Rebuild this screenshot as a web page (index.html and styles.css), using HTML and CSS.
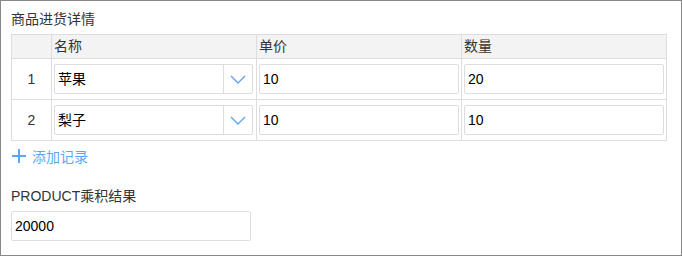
FILE: index.html
```html
<!DOCTYPE html>
<html lang="zh-CN">
<head>
<meta charset="utf-8">
<title>商品进货详情</title>
<link rel="stylesheet" href="styles.css">
</head>
<body>
<div class="panel">
  <div class="title">商品进货详情</div>
  <div class="grid">
    <div class="hcell"></div>
    <div class="hcell">名称</div>
    <div class="hcell">单价</div>
    <div class="hcell">数量</div>

    <div class="cell num">1</div>
    <div class="cell">
      <div class="select">
        <span class="select-text">苹果</span>
        <span class="select-btn"><svg width="16" height="9" viewBox="0 0 16 9"><path d="M1 1 L8 8 L15 1" fill="none" stroke="#5ea6f5" stroke-width="1.4"/></svg></span>
      </div>
    </div>
    <div class="cell"><div class="input">10</div></div>
    <div class="cell"><div class="input">20</div></div>

    <div class="cell num">2</div>
    <div class="cell">
      <div class="select">
        <span class="select-text">梨子</span>
        <span class="select-btn"><svg width="16" height="9" viewBox="0 0 16 9"><path d="M1 1 L8 8 L15 1" fill="none" stroke="#5ea6f5" stroke-width="1.4"/></svg></span>
      </div>
    </div>
    <div class="cell"><div class="input">10</div></div>
    <div class="cell"><div class="input">10</div></div>
  </div>
  <div class="add">
    <svg width="14" height="14" viewBox="0 0 14 14"><path d="M7 0 V14 M0 7 H14" stroke="#5aa8f5" stroke-width="2"/></svg>
    <span>添加记录</span>
  </div>
  <div class="label">PRODUCT乘积结果</div>
  <div class="input result">20000</div>
</div>
</body>
</html>
```
FILE: styles.css
```css
html, body {
  margin: 0;
  padding: 0;
  background: #fff;
}
body {
  font-family: "Liberation Sans", "Noto Sans CJK SC", sans-serif;
  font-size: 14px;
  color: #333;
}
.panel {
  width: 682px;
  height: 256px;
  box-sizing: border-box;
  border: 1px solid #888;
  padding: 8px 10px 0 10px;
}
.title {
  line-height: 20px;
  height: 20px;
  margin-bottom: 5px;
}
.grid {
  display: grid;
  grid-template-columns: 40px 205px 205px 205px;
  grid-template-rows: 24px 41px 41px;
  width: 656px;
  box-sizing: border-box;
  border-top: 1px solid #ddd;
  border-left: 1px solid #ddd;
}
.hcell {
  background: #f3f3f3;
  border-right: 1px solid #ddd;
  border-bottom: 1px solid #ddd;
  line-height: 23px;
  padding-left: 2px;
}
.cell {
  border-right: 1px solid #ddd;
  border-bottom: 1px solid #ddd;
  padding: 5px 2px;
  box-sizing: border-box;
}
.cell.num {
  text-align: center;
  line-height: 30px;
  padding: 5px 0;
}
.input {
  height: 30px;
  box-sizing: border-box;
  border: 1px solid #ddd;
  border-radius: 2px;
  padding: 0 3px;
  line-height: 28px;
  color: #000;
  background: #fff;
}
.select {
  display: flex;
  height: 30px;
  width: 199px;
  box-sizing: border-box;
  border: 1px solid #ddd;
  border-radius: 2px;
  color: #000;
}
.select-text {
  flex: 1;
  line-height: 28px;
  padding-left: 3px;
}
.select-btn {
  width: 28px;
  border-left: 1px solid #ddd;
  display: flex;
  align-items: center;
  justify-content: center;
}
.add {
  display: flex;
  align-items: center;
  gap: 6px;
  height: 30px;
  padding-left: 1px;
  color: #5aa8f5;
}
.label {
  margin-top: 15px;
  line-height: 20px;
  height: 20px;
  margin-bottom: 5px;
}
.result {
  width: 240px;
}
```
